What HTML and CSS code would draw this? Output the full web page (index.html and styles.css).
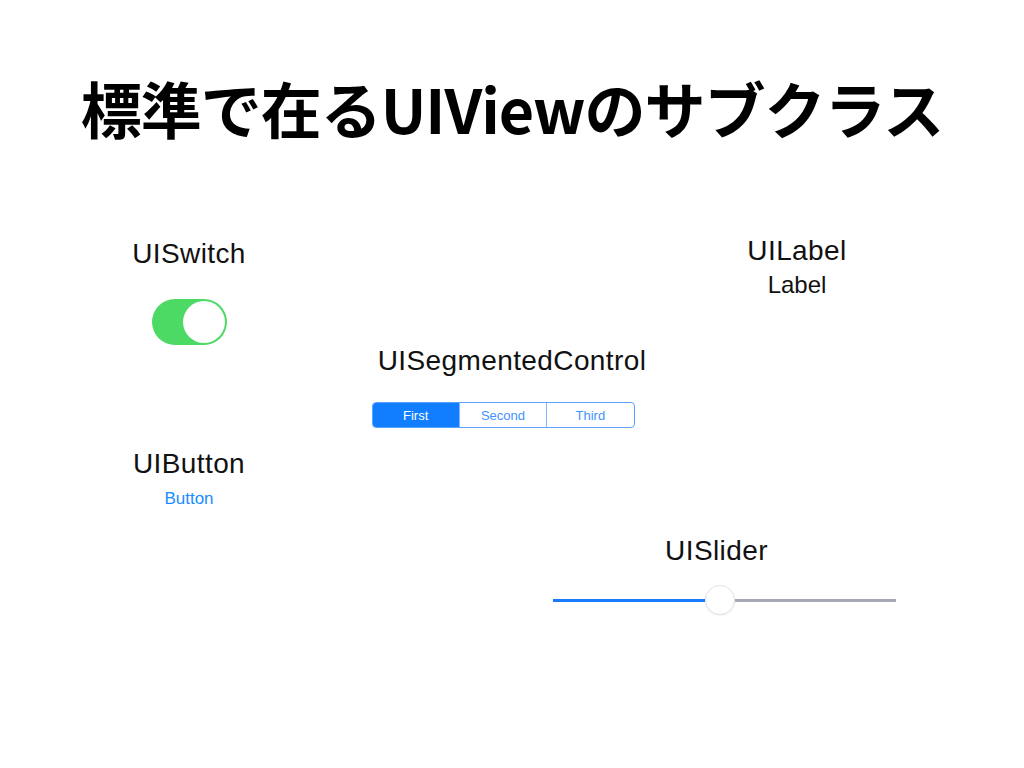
FILE: index.html
```html
<!DOCTYPE html>
<html lang="ja">
<head>
    <meta charset="UTF-8">
    <meta name="viewport" content="width=device-width, initial-scale=1.0">
    <title>標準で在るUIViewのサブクラス</title>
    <link rel="stylesheet" href="styles.css">
</head>
<body>

<div class="slide">
    <h1 class="title">標準で在るUIViewのサブクラス</h1>

    <!-- UISwitch -->
    <div class="widget w-switch">
        <div class="name">UISwitch</div>
        <div class="switch"><span class="knob"></span></div>
    </div>

    <!-- UILabel -->
    <div class="widget w-label">
        <div class="name">UILabel</div>
        <div class="label-text">Label</div>
    </div>

    <!-- UISegmentedControl -->
    <div class="widget w-segment">
        <div class="name shift-right">UISegmentedControl</div>
        <div class="segmented">
            <span class="seg selected">First</span>
            <span class="seg">Second</span>
            <span class="seg">Third</span>
        </div>
    </div>

    <!-- UIButton -->
    <div class="widget w-button">
        <div class="name">UIButton</div>
        <div class="button-text">Button</div>
    </div>

    <!-- UISlider -->
    <div class="widget w-slider">
        <div class="name shift-left">UISlider</div>
        <div class="slider">
            <span class="track-min"></span>
            <span class="thumb"></span>
            <span class="track-max"></span>
        </div>
    </div>
</div>

</body>
</html>
```

FILE: styles.css
```css
body {
    margin: 0;
    background-color: #ffffff;
    font-family: "Liberation Sans", Arial, sans-serif;
    color: #111111;
}

/* Slide canvas */
.slide {
    position: relative;
    width: 1024px;
    height: 768px;
    overflow: hidden;
}
.title {
    margin: 0;
    padding-top: 70px;
    text-align: center;
    font-family: "Noto Sans CJK JP", sans-serif;
    font-weight: 700;
    font-size: 61px;
    line-height: 76px;
    letter-spacing: -1px;
    color: #000000;
}

/* Widget groups placed on the slide */
.widget {
    position: absolute;
    display: flex;
    flex-direction: column;
    align-items: center;
}
.name {
    font-size: 28px;
    line-height: 32px;
    letter-spacing: 0.4px;
    color: #111111;
}
.shift-right {
    padding-left: 18px;
}
.shift-left {
    padding-right: 16px;
}
.w-switch {
    left: 109px;
    top: 238px;
    width: 160px;
}
.w-label {
    left: 717px;
    top: 235px;
    width: 160px;
}
.w-segment {
    left: 363px;
    top: 345px;
    width: 280px;
}
.w-button {
    left: 109px;
    top: 448px;
    width: 160px;
}
.w-slider {
    left: 553px;
    top: 535px;
    width: 343px;
}

/* UISwitch */
.switch {
    margin-top: 29px;
    width: 75px;
    height: 46px;
    border-radius: 23px;
    background-color: #4cd964;
    display: flex;
    align-items: center;
    justify-content: flex-end;
    padding: 0 2px;
    box-sizing: border-box;
}
.knob {
    width: 42px;
    height: 42px;
    border-radius: 50%;
    background-color: #ffffff;
}

/* UILabel */
.label-text {
    margin-top: 4px;
    font-size: 24px;
    line-height: 28px;
    color: #111111;
}

/* UISegmentedControl */
.segmented {
    margin-top: 25px;
    display: flex;
    width: 263px;
    height: 26px;
    border: 1px solid #5aa4ff;
    border-radius: 4px;
    box-sizing: border-box;
    overflow: hidden;
}
.seg {
    flex: 1;
    display: flex;
    align-items: center;
    justify-content: center;
    font-size: 13px;
    color: #3f93ff;
    border-left: 1px solid #7fb6ff;
}
.seg.selected {
    border-left: none;
    background-color: #117dff;
    color: #ffffff;
}

/* UIButton */
.button-text {
    margin-top: 9px;
    font-size: 17px;
    line-height: 20px;
    color: #1a8cff;
}

/* UISlider */
.slider {
    margin-top: 18px;
    width: 343px;
    height: 30px;
    display: flex;
    align-items: center;
}
.track-min {
    width: 152px;
    height: 3px;
    background-color: #1a7bff;
}
.track-max {
    flex: 1;
    height: 3px;
    background-color: #a6a8b3;
}
.thumb {
    width: 28px;
    height: 28px;
    border-radius: 50%;
    background-color: #ffffff;
    border: 1px solid #e2e2e6;
    box-shadow: 0 1px 2px rgba(0, 0, 0, 0.06);
    flex-shrink: 0;
}
```
